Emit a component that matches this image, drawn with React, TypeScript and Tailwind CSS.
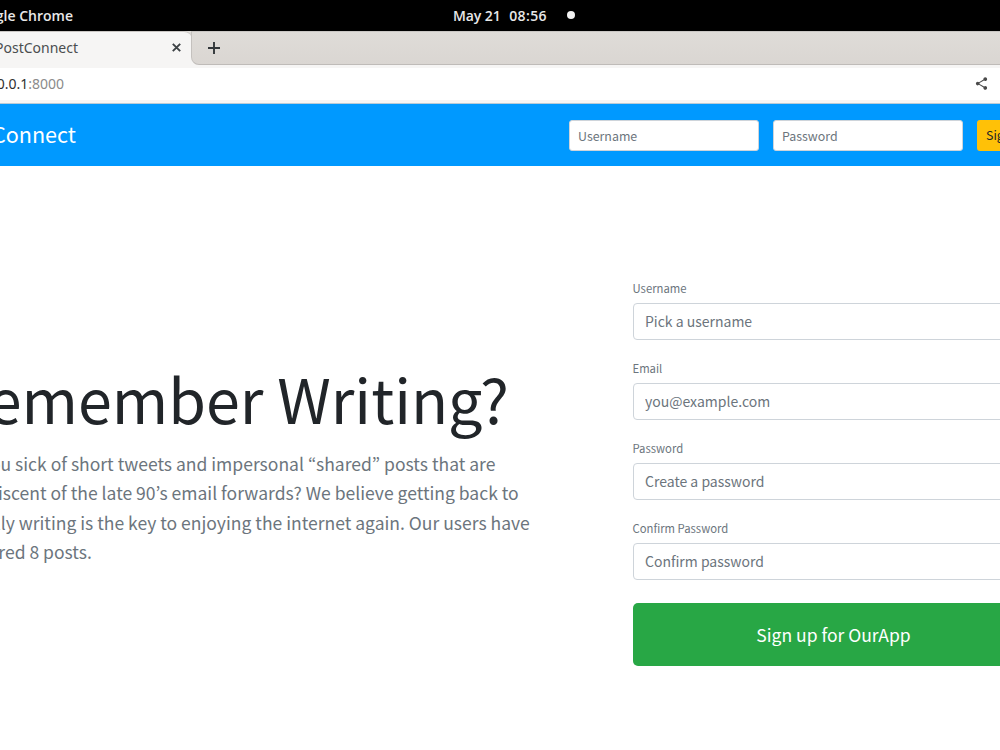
import React from "react";
import { MdShare } from "react-icons/md";

const fields = [
  { label: "Username", placeholder: "Pick a username", type: "text" },
  { label: "Email", placeholder: "you@example.com", type: "text" },
  { label: "Password", placeholder: "Create a password", type: "password" },
  { label: "Confirm Password", placeholder: "Confirm password", type: "password" },
];

function DesktopBar() {
  return (
    <div className="h-[31px] pb-px bg-black text-[#e8e8e8] font-['Open_Sans',sans-serif] font-semibold text-[14px] flex flex-row items-center whitespace-nowrap">
      <div className="w-[73px] flex justify-end">
        <span>Google Chrome</span>
      </div>
      <div className="ml-[380px] w-[94px] flex justify-between">
        <span className="tracking-[-0.1px]">May 21</span>
        <span className="tracking-[0.4px]">08:56</span>
      </div>
      <div className="ml-5 size-2 rounded-full bg-[#f2f2f2]" />
    </div>
  );
}

function TabStrip() {
  return (
    <div className="h-[34px] bg-[#f6f5f4] flex flex-row">
      <div className="w-[192px] bg-gradient-to-b from-[#dfdcd8] from-50% to-[#f6f5f4] to-50% shrink-0">
        <div className="h-full pb-0.5 bg-[#f6f5f4] border-t border-[#c9c6c3] rounded-tr-lg flex items-center font-['Noto_Sans',sans-serif] text-[14px] text-[#4a4d4f]">
          <div className="w-[78px] flex justify-end whitespace-nowrap">
            <span>PostConnect</span>
          </div>
          <svg className="ml-[94px]" width="9" height="9" viewBox="0 0 9 9" stroke="#3d4245" strokeWidth="1.9">
            <path d="M0.8 0.8L8.2 8.2M8.2 0.8L0.8 8.2" />
          </svg>
        </div>
      </div>
      <div className="flex-1 -ml-px bg-gradient-to-b from-[#dfdcd8] to-[#dad6d2] border-t border-b border-l border-t-[#c9c6c3] border-l-[#c4c1be] border-b-[#bfbbb8] rounded-bl-lg flex items-center pl-4">
        <svg width="12" height="12" viewBox="0 0 12 12" stroke="#32373a" strokeWidth="1.9">
          <path d="M6 0V12M0 6H12" />
        </svg>
      </div>
    </div>
  );
}

function AddressBar() {
  return (
    <div className="h-[39px] bg-[#f6f5f4] pt-[3px] pb-[3px] border-b border-b-[#b9cad6]">
      <div className="h-full bg-white pb-0.5 flex flex-row items-center font-['Noto_Sans',sans-serif] text-[14px] whitespace-nowrap">
        <div className="w-[64px] flex justify-end text-[#303030]">
          <span>127.0.0.1<span className="text-[#8b8b8b]">:8000</span></span>
        </div>
        <MdShare className="ml-[910px] text-[#4a4a4a]" size={15} />
      </div>
    </div>
  );
}

function NavBar() {
  return (
    <div className="h-[62px] bg-[#0099ff] flex flex-row items-center">
      <div className="w-[76px] pb-px flex justify-end whitespace-nowrap text-white text-[21.6px] shrink-0">
        <span>PostConnect</span>
      </div>
      <div className="ml-[493px] flex flex-row gap-[14px] shrink-0">
        <input className="w-[190px] h-[31px] bg-white border border-[#ced4da] rounded-[3px] px-2 pt-px text-[12.4px] placeholder:text-[#6c757d]" placeholder="Username" />
        <input className="w-[190px] h-[31px] bg-white border border-[#ced4da] rounded-[3px] px-2 pt-px text-[12.4px] placeholder:text-[#6c757d]" type="password" placeholder="Password" />
        <button className="w-16 h-[31px] bg-[#ffc107] rounded-[3px] pl-[9px] text-left text-[12.4px] text-[#212529]">Sign In</button>
      </div>
    </div>
  );
}

function Intro() {
  return (
    <div className="w-[632.5px] shrink-0 pt-[191px] whitespace-nowrap">
      <div className="w-[509px] flex justify-end">
        <h1 className="text-[61px] leading-[82px] text-[#212529]">Remember Writing?</h1>
      </div>
      <p className="-ml-[50px] mt-[10px] text-[17.52px] leading-[29.3px] text-[#6c757d]">
        Are you sick of short tweets and impersonal “shared” posts that are<br />
        reminiscent of the late 90’s email forwards? We believe getting back to<br />
        actually writing is the key to enjoying the internet again. Our users have<br />
        authored 8 posts.
      </p>
    </div>
  );
}

function SignUpForm() {
  return (
    <form className="w-[402px] shrink-0 pt-[113px]">
      {fields.map((field) => (
        <div key={field.label} className="h-20">
          <label className="block h-6 leading-[19px] text-[11.3px] text-[#6c757d]">{field.label}</label>
          <input
            className="block w-full h-[37px] border border-[#ced4da] rounded-[4px] px-[11.5px] pb-0.5 text-[14px] placeholder:text-[#6c757d]"
            type={field.type}
            placeholder={field.placeholder}
          />
        </div>
      ))}
      <button type="button" className="mt-1 w-full h-[63px] pt-0.5 bg-[#28a745] rounded-[5px] text-white text-[17.5px]">Sign up for OurApp</button>
    </form>
  );
}

export default function App() {
  return (
    <div className="w-[1000px] h-[750px] overflow-hidden bg-white font-['Noto_Sans_CJK_KR',sans-serif]">
      <DesktopBar />
      <TabStrip />
      <AddressBar />
      <NavBar />
      <div className="flex flex-row">
        <Intro />
        <SignUpForm />
      </div>
    </div>
  );
}
